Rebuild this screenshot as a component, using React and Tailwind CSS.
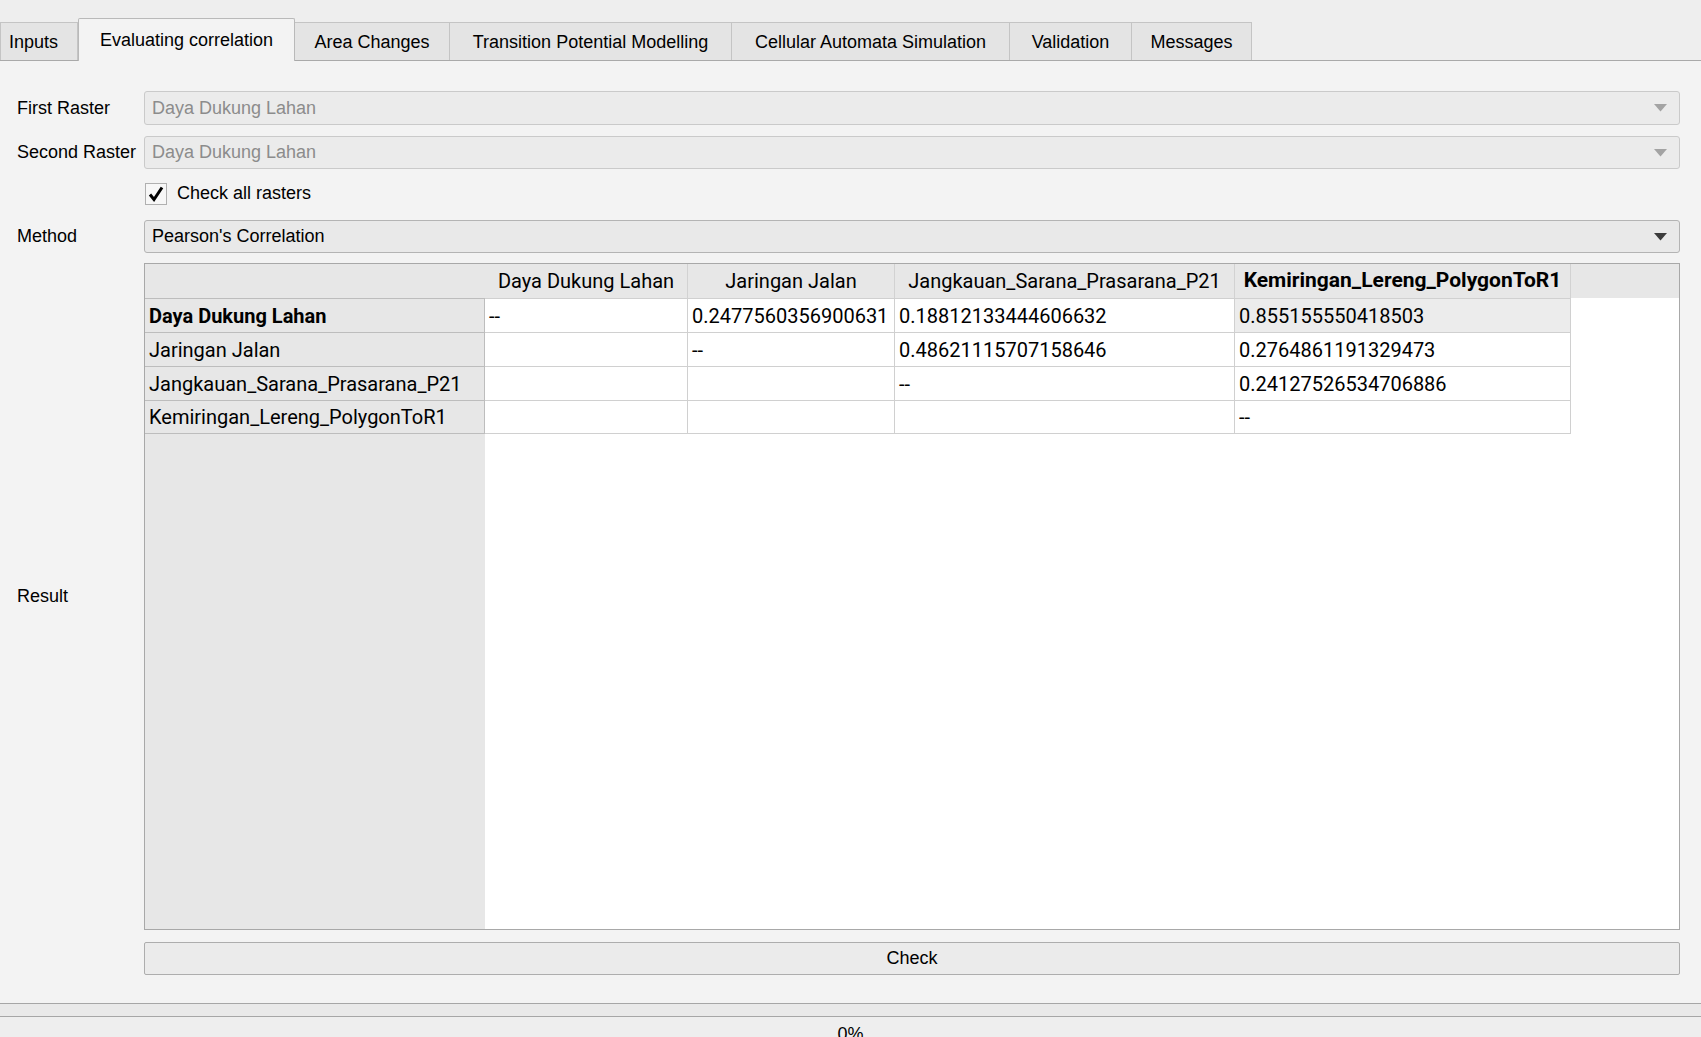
const TABS = [
  { label: "Inputs", w: "w-[78px]" },
  { label: "Evaluating correlation", w: "w-[217px]", active: true },
  { label: "Area Changes", w: "w-[155px]" },
  { label: "Transition Potential Modelling", w: "w-[282px]" },
  { label: "Cellular Automata Simulation", w: "w-[278px]" },
  { label: "Validation", w: "w-[122px]" },
  { label: "Messages", w: "w-[120px]" },
];

const NAMES = [
  "Daya Dukung Lahan",
  "Jaringan Jalan",
  "Jangkauan_Sarana_Prasarana_P21",
  "Kemiringan_Lereng_PolygonToR1",
];

const COLS = ["w-[203px]", "w-[207px]", "w-[340px]", "w-[336px]"];

const ROWS = [
  ["--", "0.2477560356900631", "0.18812133444606632", "0.855155550418503"],
  ["", "--", "0.48621115707158646", "0.2764861191329473"],
  ["", "", "--", "0.24127526534706886"],
  ["", "", "", "--"],
];

function Arrow({ dark }) {
  return (
    <svg width="13" height="8" viewBox="0 0 13 8" className="shrink-0">
      <path d="M0 0 H13 L6.5 7.5 Z" fill={dark ? "#3c3c3c" : "#a3a3a3"} />
    </svg>
  );
}

function Combo({ value, disabled }) {
  return (
    <div
      className={`flex-1 h-full flex items-center justify-between pl-[7px] pr-[12px] rounded-[3px] border ${
        disabled
          ? "border-[#cacaca] bg-[#ebebeb] text-[#8c8c8c]"
          : "border-[#b4b4b4] bg-[#e9e9e9] text-black"
      }`}
    >
      <span>{value}</span>
      <Arrow dark={!disabled} />
    </div>
  );
}

function FormRow({ label, className, children }) {
  return (
    <div className={`flex items-center ${className}`}>
      <div className="w-[127px] shrink-0">{label}</div>
      {children}
    </div>
  );
}

function ResultTable() {
  return (
    <div
      className="flex-1 h-full flex border border-[#a8a8a8] bg-white overflow-hidden text-[20px] text-black"
      style={{ fontFamily: "Roboto, 'Liberation Sans', sans-serif" }}
    >
      {/* vertical header */}
      <div className="w-[340px] shrink-0 flex flex-col bg-[#e7e7e7]">
        <div className="h-[34px] shrink-0" />
        {NAMES.map((n, i) => (
          <div
            key={n}
            className={`h-[34px] shrink-0 flex items-center pl-[4px] border-t border-r border-[#bdbdbd] whitespace-nowrap ${
              i === 0 ? "font-bold" : ""
            } ${i === NAMES.length - 1 ? "border-b" : ""}`}
          >
            {n}
          </div>
        ))}
      </div>

      {/* data area */}
      <div className="flex-1 flex flex-col">
        <div className="h-[34px] shrink-0 flex bg-[#e7e7e7]">
          {NAMES.map((n, i) => (
            <div
              key={n}
              className={`${COLS[i]} shrink-0 flex items-center justify-center border-r border-[#d2d2d2] whitespace-nowrap overflow-hidden ${
                i === 3 ? "font-bold text-[21px]" : ""
              }`}
            >
              {n}
            </div>
          ))}
        </div>
        {ROWS.map((row, r) => (
          <div key={r} className="h-[34px] shrink-0 flex">
            {row.map((v, c) => (
              <div
                key={c}
                className={`${COLS[c]} shrink-0 flex items-center pl-[4px] border-t border-r border-[#d0d0d0] whitespace-nowrap ${
                  r === ROWS.length - 1 ? "border-b" : ""
                } ${r === 0 && c === 3 ? "bg-[#ececec]" : "bg-white"}`}
              >
                {v}
              </div>
            ))}
          </div>
        ))}
      </div>
    </div>
  );
}

export default function App() {
  return (
    <div
      className="w-[1701px] h-[1037px] overflow-hidden bg-[#eeeeee] text-[18px] text-black"
      style={{ fontFamily: "'Liberation Sans', Arial, sans-serif" }}
    >
      {/* tab bar */}
      <div className="h-[60px] flex items-end">
        {TABS.map((t) =>
          t.active ? (
            <div
              key={t.label}
              className={`${t.w} h-[43px] -mb-px relative z-10 flex items-center justify-center pt-[1px] bg-[#f3f3f3] border border-b-0 border-[#b9b9b9] rounded-t-[2px]`}
            >
              {t.label}
            </div>
          ) : (
            <div
              key={t.label}
              className={`${t.w} h-[38px] flex items-center justify-center pt-[2px] bg-[#e4e4e4] border border-b-0 border-l-0 first:border-l first:justify-start first:pl-[8px] border-[#c4c4c4]`}
            >
              {t.label}
            </div>
          )
        )}
      </div>

      {/* pane */}
      <div className="border-t border-[#a9a9a9] bg-[#f3f3f3] pt-[30px] pl-[17px] pr-[21px] h-[943px]">
        <FormRow label="First Raster" className="h-[34px]">
          <Combo value="Daya Dukung Lahan" disabled />
        </FormRow>
        <FormRow label="Second Raster" className="h-[33px] mt-[11px]">
          <Combo value="Daya Dukung Lahan" disabled />
        </FormRow>
        <FormRow label="" className="h-[23px] mt-[13px]">
          <div className="w-[22px] h-[22px] ml-px flex items-center justify-center border border-[#b0b0b0] bg-[#f7f7f7]">
            <svg width="16" height="16" viewBox="0 0 16 16">
              <path d="M2 8.5 L6 13.5 L14 1.5" fill="none" stroke="#000" strokeWidth="3" strokeLinejoin="miter" />
            </svg>
          </div>
          <span className="ml-[10px]">Check all rasters</span>
        </FormRow>
        <FormRow label="Method" className="h-[33px] mt-[15px]">
          <Combo value="Pearson's Correlation" />
        </FormRow>
        <FormRow label="Result" className="h-[667px] mt-[10px]">
          <ResultTable />
        </FormRow>
        <div className="flex h-[33px] mt-[12px]">
          <div className="w-[127px] shrink-0" />
          <button className="flex-1 h-full flex items-center justify-center border border-[#adadad] rounded-[2px] bg-[#ebebeb]">
            Check
          </button>
        </div>
      </div>

      {/* progress */}
      <div className="h-[14px] border-y border-[#a6a6a6] bg-[#e9e9e9]" />
      <div className="mt-[8px] text-center leading-none">0%</div>
    </div>
  );
}
